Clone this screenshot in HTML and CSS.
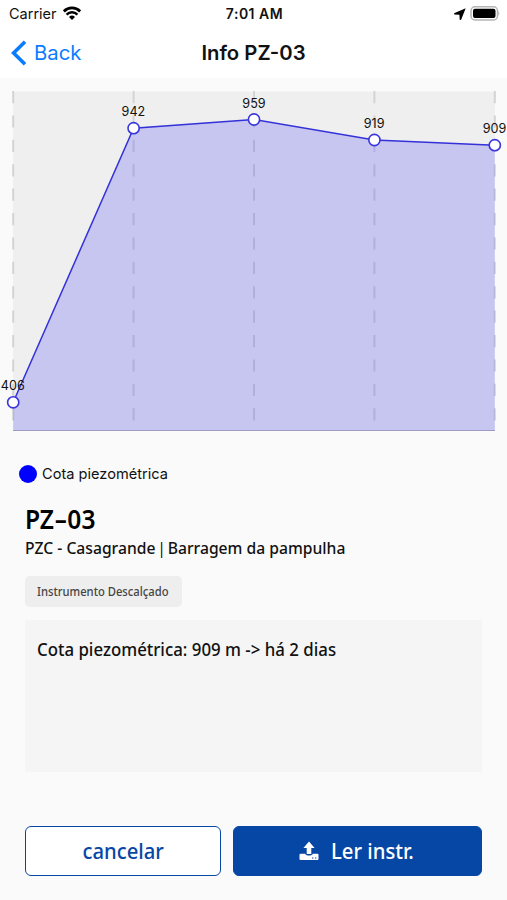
FILE: index.html
```html
<!DOCTYPE html>
<html lang="pt-BR">
<head>
    <meta charset="UTF-8">
    <meta name="viewport" content="width=device-width, initial-scale=1.0">
    <title>Info PZ-03</title>
    <link rel="stylesheet" href="styles.css">
</head>
<body>

    <!-- Status Bar -->
    <div class="status-bar">
        <div class="carrier">
            <span>Carrier</span>
            <svg class="wifi" viewBox="0 0 18 14" width="18" height="14">
                <path d="M0.8 5.4 A11.5 11.5 0 0 1 17.2 5.4" fill="none" stroke="#000" stroke-width="2.8"/>
                <path d="M3.6 8.6 A7.4 7.4 0 0 1 14.4 8.6" fill="none" stroke="#000" stroke-width="2.5"/>
                <path d="M6 11 A4.4 4.4 0 0 1 12 11 L9 14 Z"/>
            </svg>
        </div>
        <span class="time">7:01 AM</span>
        <div class="indicators">
            <svg viewBox="0 0 12 12" width="12" height="12">
                <path d="M11.7 0.2 L0.1 5.2 L0.3 6.6 L5.4 6.8 L5.7 11.7 L7 11.9 Z"/>
            </svg>
            <svg viewBox="0 0 31 15" width="31" height="15">
                <rect x="2" y="0.8" width="26.5" height="13.2" rx="4" fill="#fff" stroke="#b5b5b5" stroke-width="1.5"/>
                <rect x="4" y="2.7" width="22.5" height="9.4" rx="2"/>
                <path d="M29.3 5 Q31.3 7.4 29.3 9.8 Z" fill="#b5b5b5"/>
            </svg>
        </div>
    </div>

    <!-- Navigation -->
    <header class="nav-bar">
        <a class="back" href="#">
            <svg viewBox="0 0 16 26" width="16" height="26">
                <path d="M14 1.8 L2.6 13 L14 24.2" fill="none" stroke="#0a7cff" stroke-width="3.6"/>
            </svg>
            <span>Back</span>
        </a>
        <h1>Info PZ-03</h1>
    </header>

    <!-- Chart -->
    <svg class="chart" viewBox="0 0 507 360" width="507" height="360">
        <rect x="13" y="13.5" width="482" height="339.5" fill="#efefef"/>
        <path class="grid" d="M13.2 13 V353 M133.6 13 V353 M254 13 V353 M374.4 13 V353 M494.8 13 V353"/>
        <path class="area" d="M13.2 324.3 L133.6 50.2 L254 41.5 L374.4 62 L494.8 67.2 V353 H13.2 Z"/>
        <path class="axis" d="M13 352.5 H495"/>
        <path class="line" d="M13.2 324.3 L133.6 50.2 L254 41.5 L374.4 62 L494.8 67.2"/>
        <g class="points">
            <circle cx="13.2" cy="324.3" r="5.6"/>
            <circle cx="133.6" cy="50.2" r="5.6"/>
            <circle cx="254" cy="41.5" r="5.6"/>
            <circle cx="374.4" cy="62" r="5.6"/>
            <circle cx="494.8" cy="67.2" r="5.6"/>
        </g>
        <g class="values">
            <text x="12.8" y="312">406</text>
            <text x="133.4" y="38">942</text>
            <text x="254" y="29.6">959</text>
            <text x="374.2" y="50">919</text>
            <text x="494.6" y="55.2">909</text>
        </g>
    </svg>
    <div class="legend">
        <span class="dot"></span>
        <span>Cota piezométrica</span>
    </div>

    <!-- Instrument Details -->
    <main>
        <h2>PZ<span class="dash">-</span>03</h2>
        <p class="subtitle">
            <span>PZC - Casagrande</span>
            <span class="pipe">|</span>
            <span>Barragem da pampulha</span>
        </p>
        <div class="tag"><span>Instrumento Descalçado</span></div>
        <div class="reading"><span>Cota piezométrica: 909 m -&gt; há 2 dias</span></div>

        <div class="actions">
            <button class="cancel"><span>cancelar</span></button>
            <button class="read">
                <svg viewBox="0 0 20 20" width="20" height="20" fill="#fff">
                    <path d="M10 0.5 L15.6 6.9 H12.3 V13 H7.7 V6.9 H4.4 Z"/>
                    <path d="M1.5 12.8 H6.2 C6.4 15.2 13.6 15.2 13.8 12.8 H18.5 Q19.5 12.8 19.5 13.8 V18 Q19.5 19 18.5 19 H1.5 Q0.5 19 0.5 18 V13.8 Q0.5 12.8 1.5 12.8 Z"/>
                    <path d="M13 17 H14.4 M16 17 H17.4" stroke="#0647a6" stroke-width="1"/>
                </svg>
                <span>Ler instr.</span>
            </button>
        </div>
    </main>

</body>
</html>
```
FILE: styles.css
```css
/* General Styles */
* {
    box-sizing: border-box;
}

body {
    font-family: Inter, sans-serif;
    background-color: #fafafa;
    color: #111;
    margin: 0;
    width: 507px;
    height: 900px;
    overflow: hidden;
}

/* Status Bar */
.status-bar {
    display: grid;
    grid-template-columns: 1fr auto 1fr;
    align-items: center;
    height: 27px;
    padding: 0 7px 0 9px;
    background-color: #fff;
    font-size: 14.5px;
}

.carrier, .indicators {
    display: flex;
    align-items: center;
    gap: 6px;
}

.wifi {
    margin-top: -2px;
}

.indicators {
    justify-content: flex-end;
    gap: 3px;
}

.time {
    font-weight: 600;
    font-size: 14px;
    letter-spacing: 0.5px;
}

/* Navigation */
.nav-bar {
    display: grid;
    grid-template-columns: 1fr auto 1fr;
    align-items: center;
    height: 51px;
    padding: 0 11px;
    background-color: #fff;
}

.back {
    display: flex;
    align-items: center;
    gap: 7px;
    color: #0a7cff;
    font-size: 20.3px;
    text-decoration: none;
}

h1 {
    margin: 0;
    font-size: 20.3px;
    font-weight: 600;
}

/* Chart */
.chart {
    display: block;
}

.grid {
    fill: none;
    stroke: #d4d4d4;
    stroke-width: 2;
    stroke-dasharray: 12.2;
}

.area {
    fill: rgba(0, 0, 255, 0.17);
}

.axis {
    stroke: #9d9bc4;
}

.line {
    fill: none;
    stroke: #3431d8;
    stroke-width: 1.5;
}

.points {
    fill: #fff;
    stroke: #3936dc;
    stroke-width: 1.6;
}

.values {
    font-size: 12.6px;
    text-anchor: middle;
    fill: #111;
}

.legend {
    display: flex;
    align-items: center;
    gap: 5px;
    height: 20px;
    margin: 26px 0 0 19px;
    font-size: 14.6px;
}

.dot {
    width: 18px;
    height: 18px;
    border-radius: 50%;
    background-color: #00f;
}

/* Instrument Details */
main {
    padding: 21px 25px 0;
    font-family: "Noto Sans", sans-serif;
    font-weight: 550;
}

h2 {
    margin: 0;
    height: 28px;
    line-height: 28px;
    font-size: 27px;
    font-weight: 650;
    color: #000;
    transform: scaleX(0.91);
    transform-origin: left;
}

.dash {
    display: inline-block;
    transform: scaleX(1.6);
    margin: 0 3px;
}

.subtitle {
    display: flex;
    gap: 2px;
    margin: 0;
    height: 28px;
    line-height: 29px;
    font-size: 17px;
    white-space: nowrap;
    transform: scaleX(0.922);
    transform-origin: left;
}

.pipe {
    font-weight: 400;
}

.tag {
    width: 157px;
    height: 31px;
    margin-top: 15px;
    padding-left: 12px;
    border-radius: 5px;
    background-color: #eee;
    color: #444;
    font-size: 12px;
    line-height: 31px;
    white-space: nowrap;
}

.tag span, .reading span {
    display: inline-block;
    transform: scaleX(0.935);
    transform-origin: left;
}

.reading {
    height: 152px;
    margin-top: 13px;
    padding: 15px 12px;
    background-color: #f5f5f5;
    font-size: 18px;
    line-height: 28px;
    white-space: nowrap;
}

/* Buttons */
.actions {
    display: flex;
    gap: 12px;
    margin-top: 54px;
}

button {
    display: flex;
    align-items: center;
    justify-content: center;
    height: 50px;
    padding: 0 0 2px;
    border: 1.5px solid #0647a6;
    border-radius: 6px;
    font-family: inherit;
    font-size: 22px;
    font-weight: 550;
}

button span {
    transform: scaleX(0.92);
}

.cancel {
    width: 196px;
    background-color: #fff;
    color: #0647a6;
}

.read {
    flex: 1;
    gap: 12px;
    background-color: #0647a6;
    color: #fff;
}

.read svg {
    margin: 2px 0 0 6px;
}

.read span {
    transform-origin: left;
}
```
